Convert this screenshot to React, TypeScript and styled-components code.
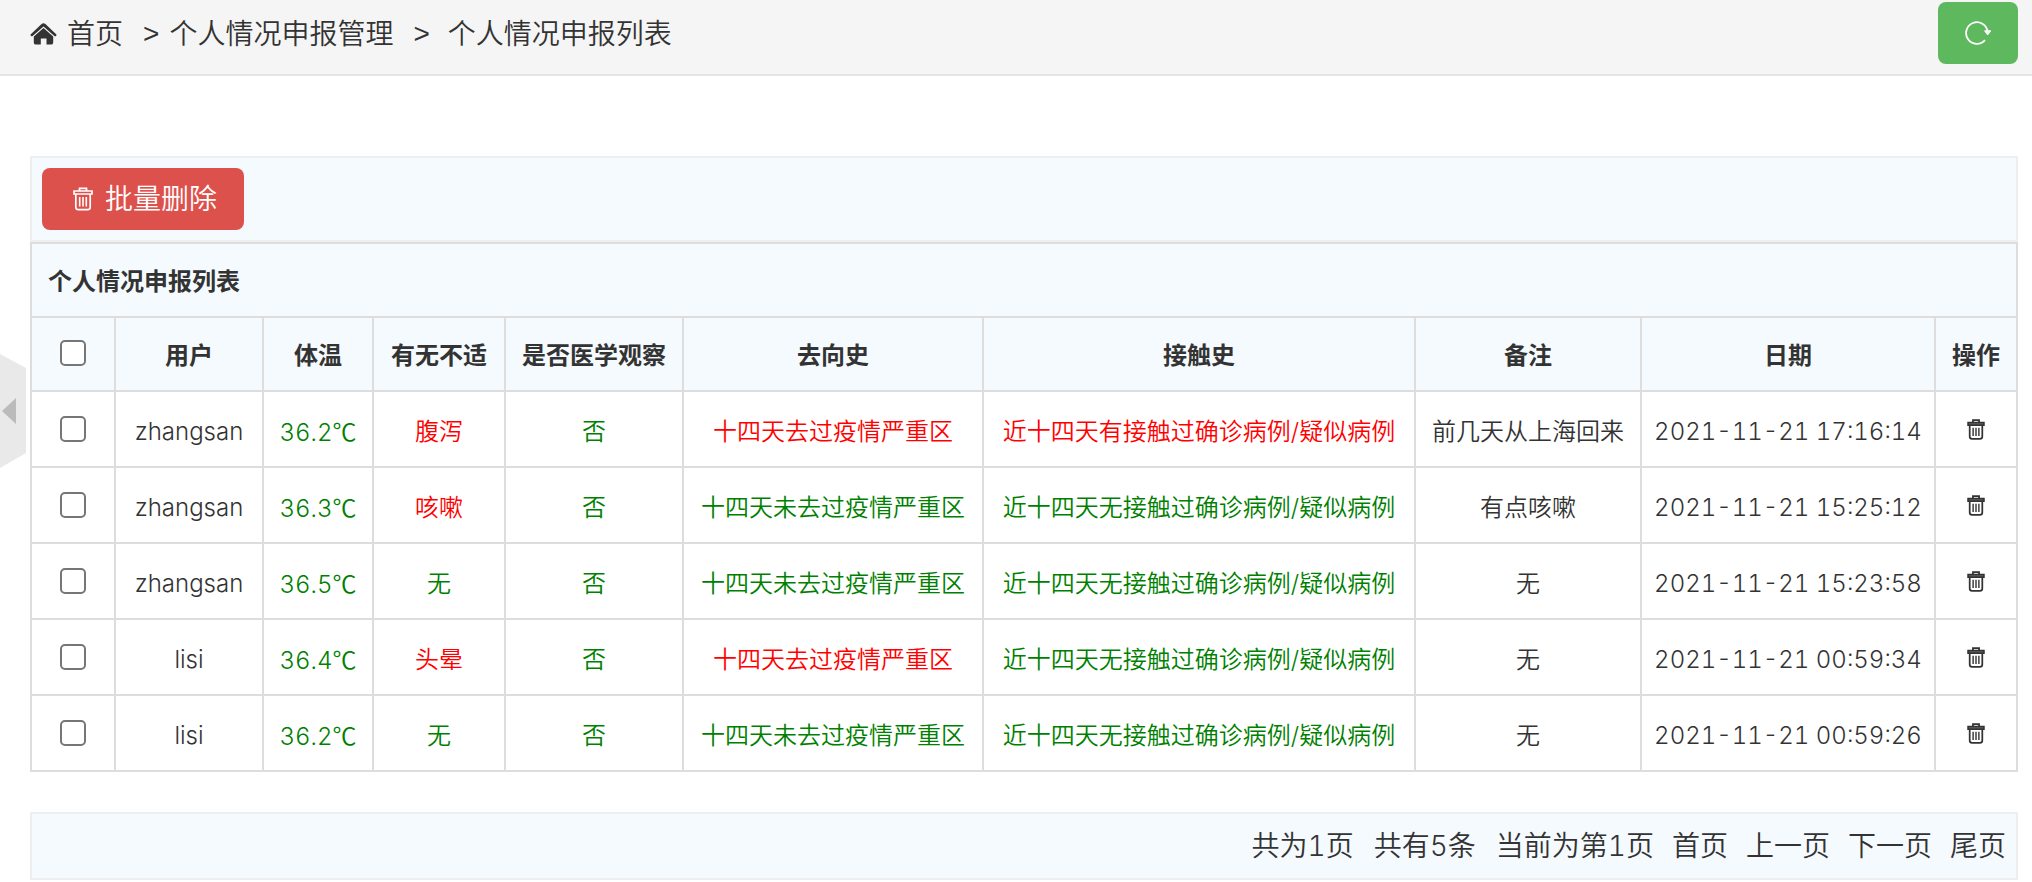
import React from 'react';
import styled, { createGlobalStyle } from 'styled-components';

const GlobalStyle = createGlobalStyle`
  *, *::before, *::after { box-sizing: border-box; }
  body {
    margin: 0;
    background: #fff;
    color: #333;
    font-family: Inter, "Noto Sans CJK SC", sans-serif;
    font-size: 28px;
    font-weight: 350;
    font-variant-numeric: tabular-nums;
    line-height: 40px;
  }
  a { color: inherit; text-decoration: none; }
`;

const Page = styled.div`
  position: relative;
`;

const Breadcrumb = styled.nav`
  display: flex;
  align-items: flex-start;
  height: 76px;
  padding: 2px 14px 0 30px;
  background: #f5f5f5;
  border-bottom: 2px solid #e5e5e5;
`;

const Crumbs = styled.div`
  display: flex;
  flex: 1;
  align-items: center;
  height: 64px;
`;

const HomeLink = styled.a`
  display: flex;
  align-items: center;
  gap: 10px;
`;

const Separator = styled.span<{ $after: number }>`
  margin: 0 ${(p) => p.$after}px 0 20px;
  font-family: "Liberation Sans", sans-serif;
`;

const Button = styled.button<{ $color: string; $width: number }>`
  display: flex;
  align-items: center;
  justify-content: center;
  gap: 12px;
  width: ${(p) => p.$width}px;
  height: 62px;
  padding: 0;
  border: 0;
  border-radius: 8px;
  background: ${(p) => p.$color};
  color: #fff;
  font: inherit;
  cursor: pointer;
`;

const DeleteButton = styled(Button)`
  padding-left: 4px;
`;

const Container = styled.main`
  padding: 80px 14px 0 30px;
`;

const Toolbar = styled.div`
  height: 86px;
  padding: 10px;
  border: 2px solid #eee;
  background: #f5fafe;
`;

const Table = styled.table`
  width: 100%;
  table-layout: fixed;
  border-collapse: collapse;
  font-size: 24px;
  text-align: center;

  th, td {
    height: 76px;
    padding: 6px 0 0;
    border: 2px solid #ddd;
    white-space: nowrap;
  }
  th {
    height: 74px;
    padding: 4px 0 0;
    background: #f5fafe;
    font-weight: 700;
  }
`;

const TitleCell = styled.th`
  && { padding-left: 16px; }
  text-align: left;
`;

const Checkbox = styled.input`
  display: block;
  appearance: none;
  width: 26px;
  height: 26px;
  margin: -6px auto 0;
  border: 2px solid #767676;
  border-radius: 5px;
  background: #fff;
  &:checked { background: #767676; }
`;

const Status = styled.span<{ $alert?: boolean }>`
  color: ${(p) => (p.$alert ? '#f00' : '#008000')};
`;

const Unit = styled.span`
  font-family: "Noto Sans CJK SC", sans-serif;
`;

const IconButton = styled.button`
  display: block;
  margin: -6px auto 0;
  padding: 0;
  border: 0;
  background: none;
  color: #333;
  line-height: 0;
  cursor: pointer;
`;

const Pagination = styled.footer`
  display: flex;
  align-items: center;
  justify-content: flex-end;
  gap: 18px;
  height: 68px;
  margin-top: 40px;
  padding: 0 10px;
  border: 2px solid #eee;
  background: #f5fafe;
`;

const PageInfo = styled.div`
  display: flex;
  gap: 20px;
`;

const SidebarToggle = styled.button`
  position: absolute;
  top: 354px;
  left: 0;
  padding: 0;
  border: 0;
  background: none;
  line-height: 0;
  cursor: pointer;
`;

const HomeIcon = () => (
  <svg width="27" height="22" viewBox="0 0 27 22" fill="currentColor" aria-hidden="true">
    <path d="M11.600 1.100Q13.500-.6 15.400 1.100L26.200 11.200Q26.800 12 26 12.900 25.200 13.500 24.400 12.900L13.500 3.400 2.600 12.900Q1.800 13.500 1 12.900.2 12 .8 11.200Z" />
    <path d="M13.500 5 23.200 13.600V19.400Q23.200 21.600 21 21.600H16.500V15.600H10.800V21.600H6Q3.800 21.600 3.800 19.400V13.600Z" />
  </svg>
);

const TrashIcon = ({ large = false }: { large?: boolean }) => (
  <svg
    width={large ? 20 : 18}
    height={large ? 24 : 21}
    viewBox="0 0 20 24"
    fill="none"
    stroke="currentColor"
    strokeWidth={large ? 1.7 : 2}
    aria-hidden="true"
  >
    <path d="M6.500 4V1.300h7V4M2.800 7v13q0 2.700 2.700 2.700h9q2.700 0 2.700-2.700V7" />
    <path d="M1 4h18v3H1Z" fill={large ? 'none' : '#777'} />
    <path d="M6.700 10v9.500M10 10v9.500M13.300 10v9.500" strokeWidth="1.600" />
  </svg>
);

const RefreshIcon = () => (
  <svg width="26" height="24" viewBox="0 0 26 24" aria-hidden="true">
    <path d="M20 19.200A10.800 10.800 0 1 1 22.600 10.500" fill="none" stroke="currentColor" strokeWidth="1.800" />
    <path d="M19.600 9.800h6.200l-3.100 4.200Z" fill="currentColor" stroke="currentColor" strokeLinejoin="round" />
  </svg>
);

interface Report {
  user: string;
  temperature: string;
  symptom: string;
  travelled: boolean;
  contacted: boolean;
  note: string;
  date: string;
}

const reports: Report[] = [
  { user: 'zhangsan', temperature: '36.2', symptom: '腹泻', travelled: true, contacted: true, note: '前几天从上海回来', date: '2021-11-21 17:16:14' },
  { user: 'zhangsan', temperature: '36.3', symptom: '咳嗽', travelled: false, contacted: false, note: '有点咳嗽', date: '2021-11-21 15:25:12' },
  { user: 'zhangsan', temperature: '36.5', symptom: '无', travelled: false, contacted: false, note: '无', date: '2021-11-21 15:23:58' },
  { user: 'lisi', temperature: '36.4', symptom: '头晕', travelled: true, contacted: false, note: '无', date: '2021-11-21 00:59:34' },
  { user: 'lisi', temperature: '36.2', symptom: '无', travelled: false, contacted: false, note: '无', date: '2021-11-21 00:59:26' },
];

const columns = [
  { title: '用户', width: 148 },
  { title: '体温', width: 110 },
  { title: '有无不适', width: 132 },
  { title: '是否医学观察', width: 178 },
  { title: '去向史', width: 300 },
  { title: '接触史', width: 432 },
  { title: '备注', width: 226 },
  { title: '日期', width: 294 },
  { title: '操作', width: 82 },
];

export default function App() {
  return (
    <Page>
      <GlobalStyle />
      <Breadcrumb>
        <Crumbs>
          <HomeLink href="#">
            <HomeIcon />
            首页
          </HomeLink>
          <Separator $after={10}>&gt;</Separator>
          <span>个人情况申报管理</span>
          <Separator $after={18}>&gt;</Separator>
          <span>个人情况申报列表</span>
        </Crumbs>
        <Button $color="#5eb95e" $width={80} aria-label="刷新">
          <RefreshIcon />
        </Button>
      </Breadcrumb>

      <Container>
        <Toolbar>
          <DeleteButton $color="#dd514c" $width={202}>
            <TrashIcon large />
            批量删除
          </DeleteButton>
        </Toolbar>
        <Table>
          <colgroup>
            <col width={84} />
            {columns.map((c) => (
              <col key={c.title} width={c.width} />
            ))}
          </colgroup>
          <thead>
            <tr>
              <TitleCell colSpan={10}>个人情况申报列表</TitleCell>
            </tr>
            <tr>
              <th><Checkbox type="checkbox" aria-label="全选" /></th>
              {columns.map((c) => (
                <th key={c.title}>{c.title}</th>
              ))}
            </tr>
          </thead>
          <tbody>
            {reports.map((r) => (
              <tr key={r.date}>
                <td><Checkbox type="checkbox" aria-label={`选择 ${r.user} ${r.date}`} /></td>
                <td>{r.user}</td>
                <td><Status>{r.temperature}<Unit>℃</Unit></Status></td>
                <td><Status $alert={r.symptom !== '无'}>{r.symptom}</Status></td>
                <td><Status>否</Status></td>
                <td><Status $alert={r.travelled}>十四天{r.travelled ? '' : '未'}去过疫情严重区</Status></td>
                <td><Status $alert={r.contacted}>近十四天{r.contacted ? '有' : '无'}接触过确诊病例/疑似病例</Status></td>
                <td>{r.note}</td>
                <td>{r.date}</td>
                <td><IconButton aria-label="删除"><TrashIcon /></IconButton></td>
              </tr>
            ))}
          </tbody>
        </Table>
        <Pagination>
          <PageInfo>
            <span>共为1页</span>
            <span>共有5条</span>
            <span>当前为第1页</span>
          </PageInfo>
          <a href="#first">首页</a>
          <a href="#prev">上一页</a>
          <a href="#next">下一页</a>
          <a href="#last">尾页</a>
        </Pagination>
      </Container>

      <SidebarToggle aria-label="收起菜单">
        <svg width="26" height="114" viewBox="0 0 26 114" aria-hidden="true">
          <path d="M0 0 26 14V99L0 114Z" fill="#e9e9e9" />
          <path d="M2 57 16 44V70Z" fill="#bbb" />
        </svg>
      </SidebarToggle>
    </Page>
  );
}
